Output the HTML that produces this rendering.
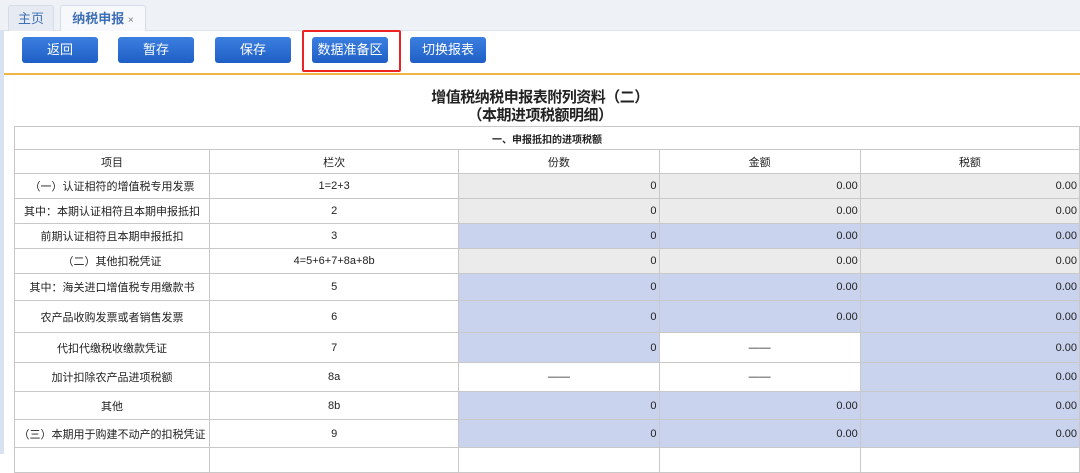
<!DOCTYPE html>
<html><head><meta charset="utf-8"><style>
body{margin:0;width:1080px;height:454px;overflow:hidden;background:#fff;font-family:"Liberation Sans","Noto Sans CJK SC",sans-serif;position:relative}
.tabbar{position:absolute;left:0;top:0;width:1080px;height:30px;background:#eef1f6;border-bottom:1px solid #dde3ec}
.tab{position:absolute;top:5px;height:25px;font-size:13px;line-height:25px;color:#3f6fb5;text-align:center;border:1px solid #d6dde8;border-bottom:none;border-radius:3px 3px 0 0}
.tool{position:absolute;left:4px;top:31px;width:1076px;height:42px;background:#fff}
.btn{position:absolute;top:37px;width:76px;height:26px;background:linear-gradient(#3b7fe0,#1f5fc6);border-radius:3px;color:#fff;font-size:13px;line-height:26px;text-align:center}
.red{position:absolute;left:302px;top:30px;width:95px;height:38px;border:2px solid #e22;border-radius:2px}
.orange{position:absolute;left:4px;top:73px;width:1076px;height:2px;background:#f0b545}
.strip{position:absolute;left:0;top:30px;width:4px;height:424px;background:#d8e2f0}
.title{position:absolute;left:0;width:1080px;text-align:center;font-weight:bold;font-size:15px;color:#222;letter-spacing:-0.5px}
table{position:absolute;left:14px;top:126px;border-collapse:collapse;table-layout:fixed;font-size:11px;color:#222}
td{border:1px solid #c8c8c8;padding:0 2px;text-align:center;white-space:nowrap;overflow:hidden}
.g{background:#ebebeb;text-align:right}.b{background:#c9d3ee;text-align:right}.w{text-align:right}
</style></head><body>
<div class="tabbar"></div>
<div class="tab" style="left:8px;width:44px;background:#e6ebf3">主页</div>
<div class="tab" style="left:60px;width:84px;background:#f7f8fb;font-weight:bold">纳税申报 <span style="font-size:10px;color:#777;font-weight:normal">×</span></div>
<div class="strip"></div>
<div class="tool"></div>
<div class="btn" style="left:22px">返回</div>
<div class="btn" style="left:118px">暂存</div>
<div class="btn" style="left:215px">保存</div>
<div class="btn" style="left:312px">数据准备区</div>
<div class="btn" style="left:410px">切换报表</div>
<div class="red"></div>
<div class="orange"></div>
<div class="title" style="top:86px">增值税纳税申报表附列资料（二）</div>
<div class="title" style="top:104px">（本期进项税额明细）</div>
<table>
<colgroup><col style="width:195px"><col style="width:250px"><col style="width:201px"><col style="width:202px"><col style="width:220px"></colgroup>
<tr style="height:23px"><td colspan="5" style="font-weight:bold;font-size:10px">一、申报抵扣的进项税额</td></tr>
<tr style="height:24px"><td>项目</td><td>栏次</td><td>份数</td><td>金额</td><td>税额</td></tr>
<tr style="height:25px"><td>（一）认证相符的增值税专用发票</td><td>1=2+3</td><td class="g">0</td><td class="g">0.00</td><td class="g">0.00</td></tr>
<tr style="height:25px"><td>其中：本期认证相符且本期申报抵扣</td><td>2</td><td class="g">0</td><td class="g">0.00</td><td class="g">0.00</td></tr>
<tr style="height:25px"><td>前期认证相符且本期申报抵扣</td><td>3</td><td class="b">0</td><td class="b">0.00</td><td class="b">0.00</td></tr>
<tr style="height:25px"><td>（二）其他扣税凭证</td><td>4=5+6+7+8a+8b</td><td class="g">0</td><td class="g">0.00</td><td class="g">0.00</td></tr>
<tr style="height:27px"><td>其中：海关进口增值税专用缴款书</td><td>5</td><td class="b">0</td><td class="b">0.00</td><td class="b">0.00</td></tr>
<tr style="height:32px"><td>农产品收购发票或者销售发票</td><td>6</td><td class="b">0</td><td class="b">0.00</td><td class="b">0.00</td></tr>
<tr style="height:30px"><td>代扣代缴税收缴款凭证</td><td>7</td><td class="b">0</td><td>——</td><td class="b">0.00</td></tr>
<tr style="height:29px"><td>加计扣除农产品进项税额</td><td>8a</td><td>——</td><td>——</td><td class="b">0.00</td></tr>
<tr style="height:28px"><td>其他</td><td>8b</td><td class="b">0</td><td class="b">0.00</td><td class="b">0.00</td></tr>
<tr style="height:28px"><td>（三）本期用于购建不动产的扣税凭证</td><td>9</td><td class="b">0</td><td class="b">0.00</td><td class="b">0.00</td></tr>
<tr style="height:25px"><td></td><td></td><td></td><td></td><td></td></tr>
</table>
</body></html>
